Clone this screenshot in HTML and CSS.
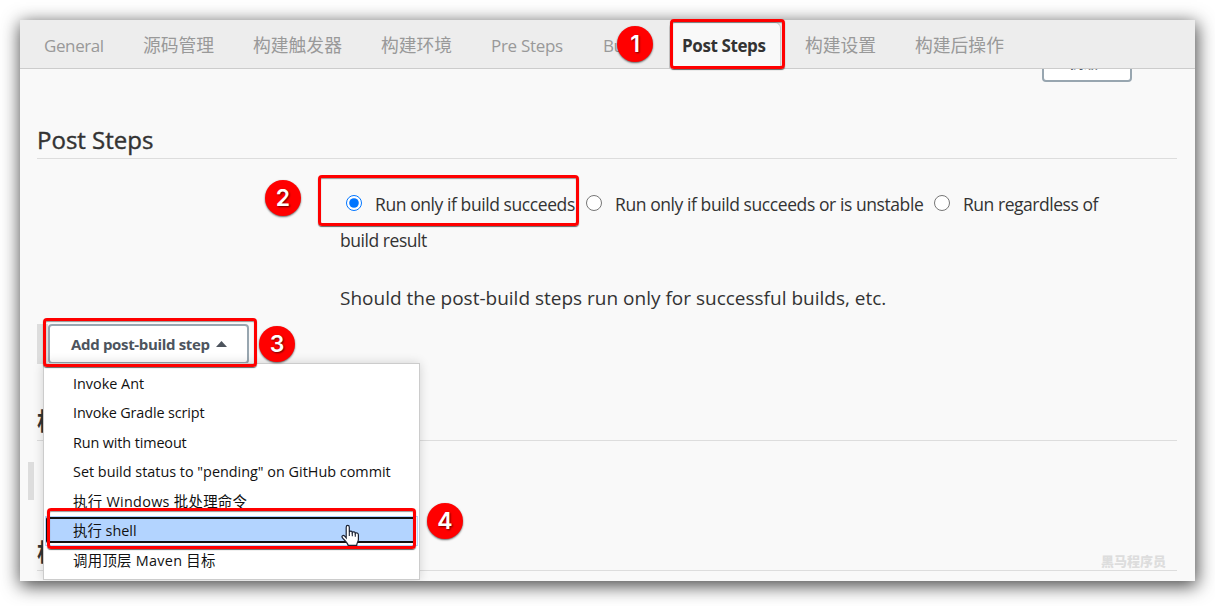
FILE: index.html
```html
<!DOCTYPE html>
<html lang="zh-CN">
<head>
<meta charset="utf-8">
<title>Post Steps</title>
<link rel="stylesheet" href="styles.css">
</head>
<body>
<div class="window">
  <nav class="tabs">
    <a class="tab latin">General</a>
    <a class="tab">源码管理</a>
    <a class="tab">构建触发器</a>
    <a class="tab">构建环境</a>
    <a class="tab latin">Pre Steps</a>
    <a class="tab latin">Build</a>
    <a class="tab active">Post Steps</a>
    <a class="tab">构建设置</a>
    <a class="tab">构建后操作</a>
  </nav>
  <main class="content">
    <div class="advanced-row"><button class="btn advanced">高级...</button></div>
    <h2 class="section-title first"><span>Post Steps</span></h2>
    <div class="settings">
      <div class="radios">
        <label class="opt opt-a"><input type="radio" name="run" checked><span>Run only if build succeeds</span></label>
        <label class="opt opt-b"><input type="radio" name="run"><span>Run only if build succeeds or is unstable</span></label>
        <label class="opt opt-c"><input type="radio" name="run"><span>Run regardless of</span></label>
      </div>
      <p class="rest">build result</p>
      <p class="help">Should the post-build steps run only for successful builds, etc.</p>
    </div>
    <div class="add-row">
      <button class="btn add"><span>Add post-build step</span><svg width="11" height="6" viewBox="0 0 11 6"><path d="M0 6 L5.5 0 L11 6Z" fill="#4d545d"/></svg></button>
      <ul class="menu">
        <li>Invoke Ant</li>
        <li class="tight">Invoke Gradle script</li>
        <li class="tight">Run with timeout</li>
        <li>Set build status to "pending" on GitHub commit</li>
        <li class="wide">执行 Windows 批处理命令</li>
        <li class="selected"><span>执行 shell</span></li>
        <li class="wide">调用顶层 Maven 目标</li>
      </ul>
    </div>
    <h2 class="section-title second">构建设置</h2>
    <div class="handle"></div>
    <h2 class="section-title third">构建后操作</h2>
  </main>
  <div class="watermark">黑马程序员</div>
</div>

<div class="mark box-1"></div><div class="mark box-2"></div><div class="mark box-3"></div><div class="mark box-4"></div>
<div class="num n1">1</div><div class="num n2">2</div><div class="num n3">3</div><div class="num n4">4</div>
<svg class="cursor" width="20" height="23" viewBox="0 0 20 23"><path d="M5.2 13.8V3.2C5.2 0.8 8.3 0.8 8.3 3.2V8C8.8 6.7 11.2 6.9 11.3 8.5C12 7.4 14.3 7.8 14.3 9.4C15.3 8.4 17.4 9 17.4 10.8V15.5C17.4 17.6 15.7 18.4 15.7 21.3H7.2C6.6 18.5 2.8 15.8 1.3 13.7C.1 11.8 2.4 10.7 3.7 12.1Z" fill="#fff" stroke="#1b2233" stroke-width="1.2"/><path d="M8.3 8V12M11.3 8.5V12.3M14.3 9.4V12.7" stroke="#1b2233" stroke-width="1.1"/></svg>
</body>
</html>
```
FILE: styles.css
```css
* { box-sizing: border-box; }
body {
  margin: 0; padding: 20px; width: 1215px; height: 606px; overflow: hidden;
  position: relative; background: #fff; color: #333;
  font-family: "Open Sans", "Noto Sans CJK SC", sans-serif;
}
.window {
  position: relative; width: 1175px; height: 561px;
  background: #f9f9f9; box-shadow: 1px 4px 17px 1px rgba(0, 0, 0, .72);
}
.tabs {
  position: relative; z-index: 1; height: 49px; padding-left: 11px;
  display: grid; grid-template-columns: 99px 110px 128px 110px 112px 79px 123px 110px 130px;
  background: #ededed; border-bottom: 1px solid #ccc;
}
.tab { padding-left: 13px; font-size: 17.8px; line-height: 51px; white-space: nowrap; color: #999; font-weight: 400; }
.tab.latin { font-size: 17px; line-height: 51px; letter-spacing: -.4px; }
.tab.latin:nth-child(5) { letter-spacing: -.3px; }
.tab.active {
  width: 112px; height: 47px; margin-top: 2px; padding-left: 12px; line-height: 46px;
  font-size: 17px; font-weight: 700; letter-spacing: -.4px; color: #333;
  background: #f9f9f9; border: 1px solid #ccc; border-bottom: 0; border-radius: 6px 6px 0 0;
}
.content { height: 512px; padding: 0 18px 0 17px; overflow: hidden; }
.btn {
  background: #fff; border: 2px solid #98a6b0; border-radius: 4px; padding: 0;
  font-family: inherit; font-weight: 700; color: #4d545d;
}
.advanced-row { height: 40px; margin-top: -27px; padding-right: 45px; display: flex; justify-content: flex-end; }
.advanced { width: 90px; height: 40px; padding: 0 0 1px 6px; font-size: 14px; }
.section-title { margin: 0; border-bottom: 1px solid #ddd; font-size: 24px; white-space: nowrap; }
.section-title.first { margin-top: 40px; height: 37px; line-height: 36px; font-weight: 500; letter-spacing: 0; color: #333; -webkit-text-stroke: .4px #333; }
.settings { height: 165px; padding: 27px 0 0 303px; font-size: 17.5px; line-height: 36px; white-space: nowrap; }
.radios { display: flex; height: 36px; padding-left: 6px; }
.opt { display: flex; }
.opt-a { width: 240px; letter-spacing: -.42px; }
.opt-b { width: 348px; letter-spacing: -.42px; }
.opt-c { letter-spacing: -.46px; }
.opt input { width: 16px; height: 16px; margin: 9px 13px 0 0; flex: none; }
.rest { margin: 0; height: 36px; letter-spacing: -.45px; }
.help { margin: 22px 0 0; font-size: 19px; }
.add-row { position: relative; height: 40px; display: flex; padding-left: 11px; }
.add-row::before { content: ""; width: 11px; height: 40px; margin-left: -11px; background: #ddd; }
.add { width: 201px; height: 40px; display: flex; align-items: center; padding-left: 21px; gap: 6px; font-size: 15px; letter-spacing: -.33px; white-space: nowrap; }
.menu {
  position: absolute; left: 6px; top: 39px; width: 377px; height: 217px; margin: 0; padding: 4.5px 0 0;
  list-style: none; background: #fff; border: 1px solid #ccc; box-shadow: 0 0 10px rgba(0, 0, 0, .16);
  color: #111; font-size: 14.4px; line-height: 30px; white-space: nowrap;
}
.menu li { height: 29.5px; padding-left: 29px; }
.menu .tight { letter-spacing: -.12px; }
.menu .wide { letter-spacing: .3px; }
.menu .selected { margin: 0 1px; padding: 1px 2px 2px 1px; border: 0; background: linear-gradient(#fff, #fff) center / calc(100% - 2px) calc(100% - 2px) no-repeat #b3d4ff; }
.menu .selected span { display: block; height: 26px; padding-left: 25px; line-height: 23px; background: #b3d4ff; border: 2px solid #111; border-radius: 2px; }
.section-title.second { margin-top: 36px; height: 41px; line-height: 42px; }
.handle { width: 6px; height: 38px; margin: 21px 0 0 -9px; background: #ddd; }
.section-title.third { margin-top: 33px; height: 38px; line-height: 38px; }
.watermark { position: absolute; right: 29px; bottom: 11px; font: 900 13px/18px "Noto Sans CJK SC", sans-serif; color: #ddd; }
.cursor { position: absolute; z-index: 4; left: 341px; top: 524px; }
.mark { position: absolute; z-index: 3; border: 3px solid #f00; border-radius: 4px; box-shadow: 0 1px 1px rgba(0, 0, 0, .6), inset 0 1px 1px rgba(0, 0, 0, .4); }
.box-1 { left: 670px; top: 19px; width: 115px; height: 50px; }
.box-2 { left: 318px; top: 175px; width: 261px; height: 51px; }
.box-3 { left: 43px; top: 318px; width: 214px; height: 49px; }
.box-4 { left: 47px; top: 508px; width: 369px; height: 41px; }
.num {
  position: absolute; z-index: 3; width: 36px; height: 36px; border-radius: 50%; background: #f00; color: #fff;
  font: 600 23px/36px Inter, sans-serif; text-align: center; box-shadow: 0 1px 2px rgba(0, 0, 0, .6); text-shadow: 1px 1px 2px rgba(0, 0, 0, .6);
}
.n1 { left: 617px; top: 26px; }
.n2 { left: 265px; top: 180px; }
.n3 { left: 259px; top: 326px; }
.n4 { left: 427px; top: 503px; }
```
